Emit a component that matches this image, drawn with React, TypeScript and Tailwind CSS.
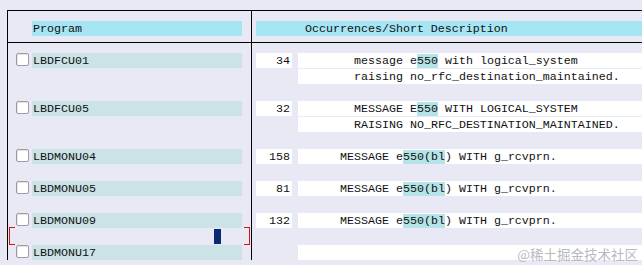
type Line = {
  prog?: string;
  num?: string;
  desc?: string;
  hl?: string;
  cursor?: boolean;
};

const lines: Line[] = [
  { prog: "LBDFCU01", num: "34", desc: "        message e550 with logical_system", hl: "550" },
  { desc: "        raising no_rfc_destination_maintained." },
  {},
  { prog: "LBDFCU05", num: "32", desc: "        MESSAGE E550 WITH LOGICAL_SYSTEM", hl: "550" },
  { desc: "        RAISING NO_RFC_DESTINATION_MAINTAINED." },
  {},
  { prog: "LBDMONU04", num: "158", desc: "      MESSAGE e550(bl) WITH g_rcvprn.", hl: "550(bl" },
  {},
  { prog: "LBDMONU05", num: "81", desc: "      MESSAGE e550(bl) WITH g_rcvprn.", hl: "550(bl" },
  {},
  { prog: "LBDMONU09", num: "132", desc: "      MESSAGE e550(bl) WITH g_rcvprn.", hl: "550(bl" },
  { cursor: true },
  { prog: "LBDMONU17", desc: "" },
];

const mono = "font-['Liberation_Mono','DejaVu_Sans_Mono',monospace] text-[11.67px] leading-[17px] whitespace-pre text-[#111]";

const Desc = ({ text, hl }: { text: string; hl?: string }) => {
  if (!hl) return <>{text}</>;
  const i = text.indexOf(hl);
  return (
    <>
      {text.slice(0, i)}
      <span className="bg-[#b4e3e8]">{hl}</span>
      {text.slice(i + hl.length)}
    </>
  );
};

const Checkbox = () => (
  <div className="w-[13px] h-[13px] border border-[#9c9ca4] rounded-[2px] bg-white shadow-[inset_1px_1px_0_#e4e4e4]" />
);

export default function App() {
  return (
    <div className={`relative w-[642px] h-[265px] overflow-hidden bg-[#e9e9f5] pt-[10px] ${mono}`}>
      <div className="ml-[7px] h-[250px] border-t border-l border-black flex">
        {/* left column */}
        <div className="w-[244px] border-r border-black flex flex-col">
          <div className="h-[32px] border-b border-black pt-[10px]">
            <div className="ml-[24px] w-[210px] h-[15px] bg-[#a6e5f3] pl-px overflow-hidden">Program</div>
          </div>
          <div className="pt-[10px] flex flex-col gap-px">
            {lines.map((l, i) => (
              <div key={i} className="relative h-[15px] flex items-start">
                {l.prog && (
                  <>
                    <div className="ml-[8px] w-[16px]">
                      <Checkbox />
                    </div>
                    <div className="w-[210px] h-[15px] bg-[#cbe3e4] pl-px overflow-hidden">{l.prog}</div>
                  </>
                )}
                {l.cursor && (
                  <>
                    <div className="absolute left-[1px] top-[-2px] w-[6px] h-[18px] border-l border-t border-b border-[#e01010]" />
                    <div className="absolute right-[1px] top-[-2px] w-[6px] h-[18px] border-r border-t border-b border-[#e01010]" />
                    <div className="absolute left-[206px] top-0 w-[7px] h-[15px] bg-[#0c2870]" />
                  </>
                )}
              </div>
            ))}
          </div>
        </div>
        {/* right column */}
        <div className="flex-1 flex flex-col">
          <div className="h-[32px] border-b border-black pt-[10px] pl-[4px]">
            <div className="h-[15px] bg-[#a6e5f3] overflow-hidden">{"       Occurrences/Short Description"}</div>
          </div>
          <div className="pt-[10px] pl-[4px] flex flex-col gap-px">
            {lines.map((l, i) => (
              <div key={i} className="h-[15px] flex">
                <div className={`w-[36px] h-[15px] text-right pr-[2px] ${l.num ? "bg-white" : ""}`}>{l.num}</div>
                {l.desc !== undefined && (
                  <div className="ml-[6px] flex-1 h-[15px] bg-white overflow-hidden">
                    <Desc text={l.desc} hl={l.hl} />
                  </div>
                )}
              </div>
            ))}
          </div>
        </div>
      </div>
      <div className="absolute right-[4px] bottom-[2px] font-['Noto_Sans_CJK_SC',sans-serif] text-[13.5px] leading-[18px] text-[#b9b9c2] [text-shadow:0_0_2px_#fff]">
        @稀土掘金技术社区
      </div>
    </div>
  );
}
